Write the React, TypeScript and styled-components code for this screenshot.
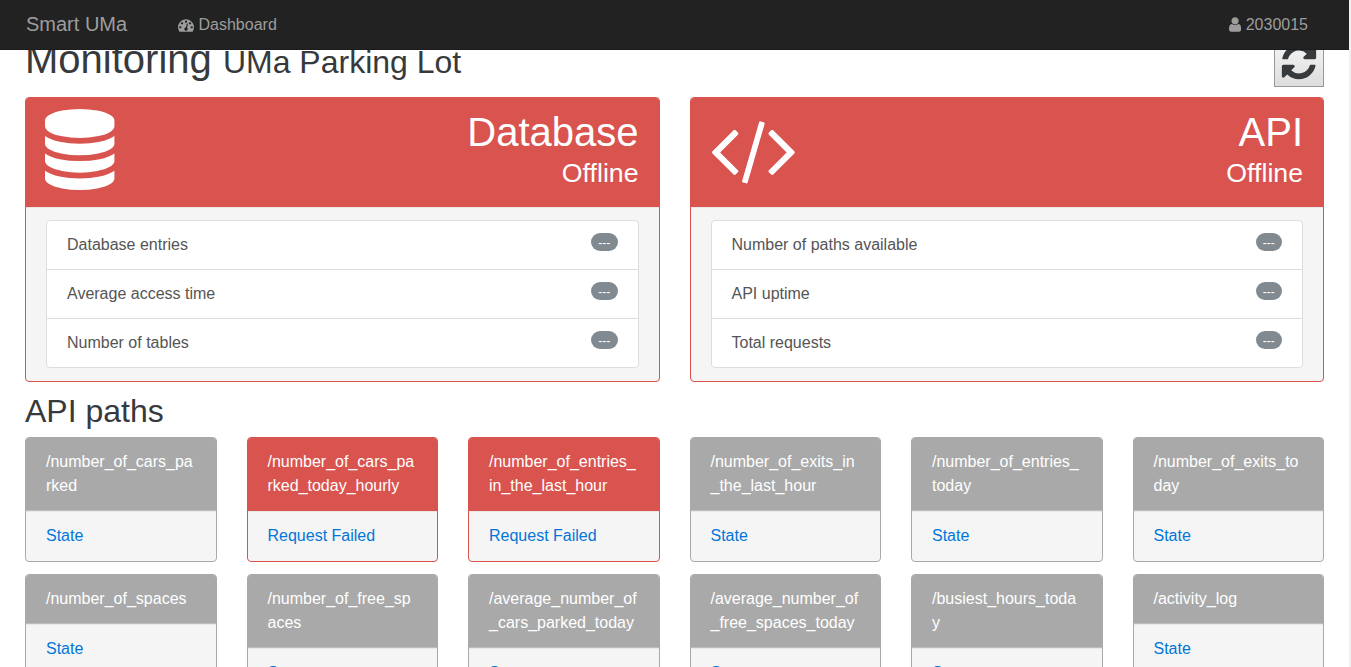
import React from "react";
import styled, { createGlobalStyle } from "styled-components";

const RED = "#d9534f";
const GRAY = "#a9a9a9";

const GlobalStyle = createGlobalStyle`
  *, *::before, *::after { box-sizing: border-box; }
  html, body { height: 100%; margin: 0; overflow: hidden; }
  body {
    background: #f1f1f1;
    color: #373a3c;
    font: 16px/24px "Liberation Sans", Arial, sans-serif;
  }
`;

const Page = styled.div`
  width: 1349px;
  height: 667px;
  overflow: hidden;
  background: #fff;
`;

const Navbar = styled.nav`
  position: relative;
  z-index: 1;
  display: flex;
  align-items: center;
  height: 50px;
  padding: 0 41px 0 26px;
  background: #222;
  border-bottom: 1px solid #1c1c1c;
  color: #9d9d9d;
`;

const Brand = styled.span`
  width: 152px;
  padding-bottom: 1px;
  font-size: 20px;
`;

const NavItem = styled.span<{ $end?: boolean }>`
  display: flex;
  align-items: center;
  gap: ${(p) => (p.$end ? "5px" : "4.5px")};
  margin-left: ${(p) => (p.$end ? "auto" : "0")};
`;

const Glyph = styled.svg`
  display: block;
  flex: none;
  fill: currentColor;
`;

const Main = styled.main`
  margin-top: -13px;
  padding: 0 25px;
`;

const TitleRow = styled.header`
  display: flex;
  justify-content: space-between;
  align-items: flex-start;
  height: 60px;
`;

const Title = styled.h1`
  margin: 0;
  font-size: 40px;
  line-height: 44px;
  font-weight: 400;

  small {
    font-size: 32px;
    font-weight: 400;
  }
`;

const RefreshButton = styled.button`
  display: flex;
  align-items: center;
  justify-content: center;
  width: 50px;
  height: 50px;
  padding: 0;
  border: 1px solid #999;
  background: linear-gradient(#f6f6f6, #dddddd);
  color: #373a3c;
`;

const CardGrid = styled.div<{ $columns: number }>`
  display: grid;
  grid-template-columns: repeat(${(p) => p.$columns}, minmax(0, 1fr));
  align-items: start;
  gap: 12px 30px;
`;

const Card = styled.section<{ $color: string }>`
  overflow: hidden;
  border: 1px solid ${(p) => p.$color};
  border-radius: 4px;
  background: #f5f5f5;
`;

const StatusHeader = styled.div`
  display: flex;
  justify-content: space-between;
  height: 109px;
  padding: 11px 20px 0 19.4px;
  background: ${RED};
  color: #fff;
  text-align: right;
`;

const StatusName = styled.div`
  font-size: 40px;
  line-height: 44px;
  padding-top: 1px;
`;

const StatusText = styled.div`
  font-size: 26.7px;
  line-height: 39px;
`;

const StatusBody = styled.div`
  padding: 12px 20px 13px;
  border-top: 1px solid #e8e8e8;
`;

const StatList = styled.ul`
  margin: 0;
  padding: 0;
  list-style: none;
  border: 1px solid #ddd;
  border-radius: 4px;
  background: #fff;
`;

const StatRow = styled.li`
  display: flex;
  justify-content: space-between;
  align-items: flex-start;
  padding: 12px 20px;
  color: #555;

  & + & {
    border-top: 1px solid #ddd;
  }
`;

const Badge = styled.span`
  padding: 4px 7.2px 2px;
  border-radius: 160px;
  background: #818a91;
  color: #fff;
  font-size: 12px;
  line-height: 12px;
`;

const SectionTitle = styled.h2`
  margin: 12px 0 8px;
  font-size: 32px;
  line-height: 35px;
  font-weight: 400;
`;

const PathName = styled.div<{ $color: string; $edge: string }>`
  padding: 12px 20px;
  border-bottom: 1px solid ${(p) => p.$edge};
  background: ${(p) => p.$color};
  color: #fff;
  word-break: break-all;
`;

const PathState = styled.div`
  padding: 12px 20px 13px;
  border-top: 1px solid #e8e8e8;
  color: #0275d8;
`;

const icons = {
  dashboard: {
    width: 1792,
    path: "M384 1152q0-53-37.5-90.5t-90.5-37.5-90.5 37.5-37.5 90.5 37.5 90.5 90.5 37.5 90.5-37.5 37.5-90.5zm192-448q0-53-37.5-90.5t-90.5-37.5-90.5 37.5-37.5 90.5 37.5 90.5 90.5 37.5 90.5-37.5 37.5-90.5zm428 481l101-382q6-26-7.5-48.5t-38.5-29.5-48 6.5-30 39.5l-101 382q-60 5-107 43.5t-63 98.5q-20 77 20 146t117 89 146-20 89-117q16-60-6-117t-72-91zm660-33q0-53-37.5-90.5t-90.5-37.5-90.5 37.5-37.5 90.5 37.5 90.5 90.5 37.5 90.5-37.5 37.5-90.5zm-640-640q0-53-37.5-90.5t-90.5-37.5-90.5 37.5-37.5 90.5 37.5 90.5 90.5 37.5 90.5-37.5 37.5-90.5zm448 192q0-53-37.5-90.5t-90.5-37.5-90.5 37.5-37.5 90.5 37.5 90.5 90.5 37.5 90.5-37.5 37.5-90.5zm320 448q0 261-141 483-19 29-54 29h-1402q-35 0-54-29-141-221-141-483 0-182 71-348t191-286 286-191 348-71 348 71 286 191 191 286 71 348z",
  },
  user: {
    width: 1280,
    path: "M1280 1399q0 109-62.5 187t-150.5 78h-854q-88 0-150.5-78t-62.5-187q0-85 8.5-160.5t31.5-152 58.5-131 94-89 134.5-34.5q131 128 313 128t313-128q76 0 134.5 34.5t94 89 58.5 131 31.5 152 8.5 160.5zm-256-887q0 159-112.5 271.5t-271.5 112.5-271.5-112.5-112.5-271.5 112.5-271.5 271.5-112.5 271.5 112.5 112.5 271.5z",
  },
  refresh: {
    width: 1792,
    path: "M1639 1056q0 5-1 7-64 268-268 434.5t-478 166.5q-146 0-282.5-55t-243.5-157l-129 129q-19 19-45 19t-45-19-19-45v-448q0-26 19-45t45-19h448q26 0 45 19t19 45-19 45l-137 137q71 66 161 102t187 36q134 0 250-65t186-179q11-17 53-117 8-23 30-23h192q13 0 22.5 9.5t9.5 22.5zm25-800v448q0 26-19 45t-45 19h-448q-26 0-45-19t-19-45 19-45l138-138q-148-137-349-137-134 0-250 65t-186 179q-11 17-53 117-8 23-30 23h-199q-13 0-22.5-9.5t-9.5-22.5v-7q65-268 270-434.5t480-166.5q146 0 284 55.5t245 156.5l130-129q19-19 45-19t45 19 19 45z",
  },
  database: {
    width: 1536,
    path: "M768 768q237 0 443-43t325-127v170q0 69-103 128t-280 93.5-385 34.5-385-34.5-280-93.5-103-128v-170q119 84 325 127t443 43zm0 768q237 0 443-43t325-127v170q0 69-103 128t-280 93.5-385 34.5-385-34.5-280-93.5-103-128v-170q119 84 325 127t443 43zm0-384q237 0 443-43t325-127v170q0 69-103 128t-280 93.5-385 34.5-385-34.5-280-93.5-103-128v-170q119 84 325 127t443 43zm0-1152q208 0 385 34.5t280 93.5 103 128v128q0 69-103 128t-280 93.5-385 34.5-385-34.5-280-93.5-103-128v-128q0-69 103-128t280-93.5 385-34.5z",
  },
  code: {
    width: 1920,
    path: "M617 1399l-50 50q-10 10-23 10t-23-10l-466-466q-10-10-10-23t10-23l466-466q10-10 23-10t23 10l50 50q10 10 10 23t-10 23l-393 393 393 393q10 10 10 23t-10 23zm591-1067l-373 1291q-4 13-15.5 19.5t-23.5 2.5l-62-17q-13-4-19.5-15.5t-2.5-24.5l373-1291q4-13 15.5-19.5t23.5-2.5l62 17q13 4 19.5 15.5t2.5 24.5zm657 651l-466 466q-10 10-23 10t-23-10l-50-50q-10-10-10-23t10-23l393-393-393-393q-10-10-10-23t10-23l50-50q10-10 23-10t23 10l466 466q10 10 10 23t-10 23z",
  },
};

type IconName = keyof typeof icons;

function Icon({ name, size }: { name: IconName; size: number }) {
  const { width, path } = icons[name];
  return (
    <Glyph width={(size * width) / 1792} height={size} viewBox={`0 0 ${width} 1792`} aria-hidden>
      <path d={path} />
    </Glyph>
  );
}

const services: { name: string; icon: IconName; stats: string[] }[] = [
  {
    name: "Database",
    icon: "database",
    stats: ["Database entries", "Average access time", "Number of tables"],
  },
  {
    name: "API",
    icon: "code",
    stats: ["Number of paths available", "API uptime", "Total requests"],
  },
];

const paths: { name: string; failed?: boolean }[] = [
  { name: "/number_of_cars_parked" },
  { name: "/number_of_cars_parked_today_hourly", failed: true },
  { name: "/number_of_entries_in_the_last_hour", failed: true },
  { name: "/number_of_exits_in_the_last_hour" },
  { name: "/number_of_entries_today" },
  { name: "/number_of_exits_today" },
  { name: "/number_of_spaces" },
  { name: "/number_of_free_spaces" },
  { name: "/average_number_of_cars_parked_today" },
  { name: "/average_number_of_free_spaces_today" },
  { name: "/busiest_hours_today" },
  { name: "/activity_log" },
];

export default function App() {
  return (
    <>
      <GlobalStyle />
      <Page>
        <Navbar>
          <Brand>Smart UMa</Brand>
          <NavItem>
            <Icon name="dashboard" size={16} />
            Dashboard
          </NavItem>
          <NavItem $end>
            <Icon name="user" size={17} />
            2030015
          </NavItem>
        </Navbar>
        <Main>
          <TitleRow>
            <Title>
              Monitoring <small>UMa Parking Lot</small>
            </Title>
            <RefreshButton aria-label="Refresh">
              <Icon name="refresh" size={40} />
            </RefreshButton>
          </TitleRow>
          <CardGrid $columns={2}>
            {services.map((service) => (
              <Card key={service.name} $color={RED}>
                <StatusHeader>
                  <Icon name={service.icon} size={81} />
                  <div>
                    <StatusName>{service.name}</StatusName>
                    <StatusText>Offline</StatusText>
                  </div>
                </StatusHeader>
                <StatusBody>
                  <StatList>
                    {service.stats.map((stat) => (
                      <StatRow key={stat}>
                        {stat}
                        <Badge>---</Badge>
                      </StatRow>
                    ))}
                  </StatList>
                </StatusBody>
              </Card>
            ))}
          </CardGrid>
          <SectionTitle>API paths</SectionTitle>
          <CardGrid $columns={6}>
            {paths.map((path) => {
              const color = path.failed ? RED : GRAY;
              return (
                <Card key={path.name} $color={color}>
                  <PathName $color={color} $edge={path.failed ? RED : "#bdbdbd"}>
                    {path.name}
                  </PathName>
                  <PathState>{path.failed ? "Request Failed" : "State"}</PathState>
                </Card>
              );
            })}
          </CardGrid>
        </Main>
      </Page>
    </>
  );
}
